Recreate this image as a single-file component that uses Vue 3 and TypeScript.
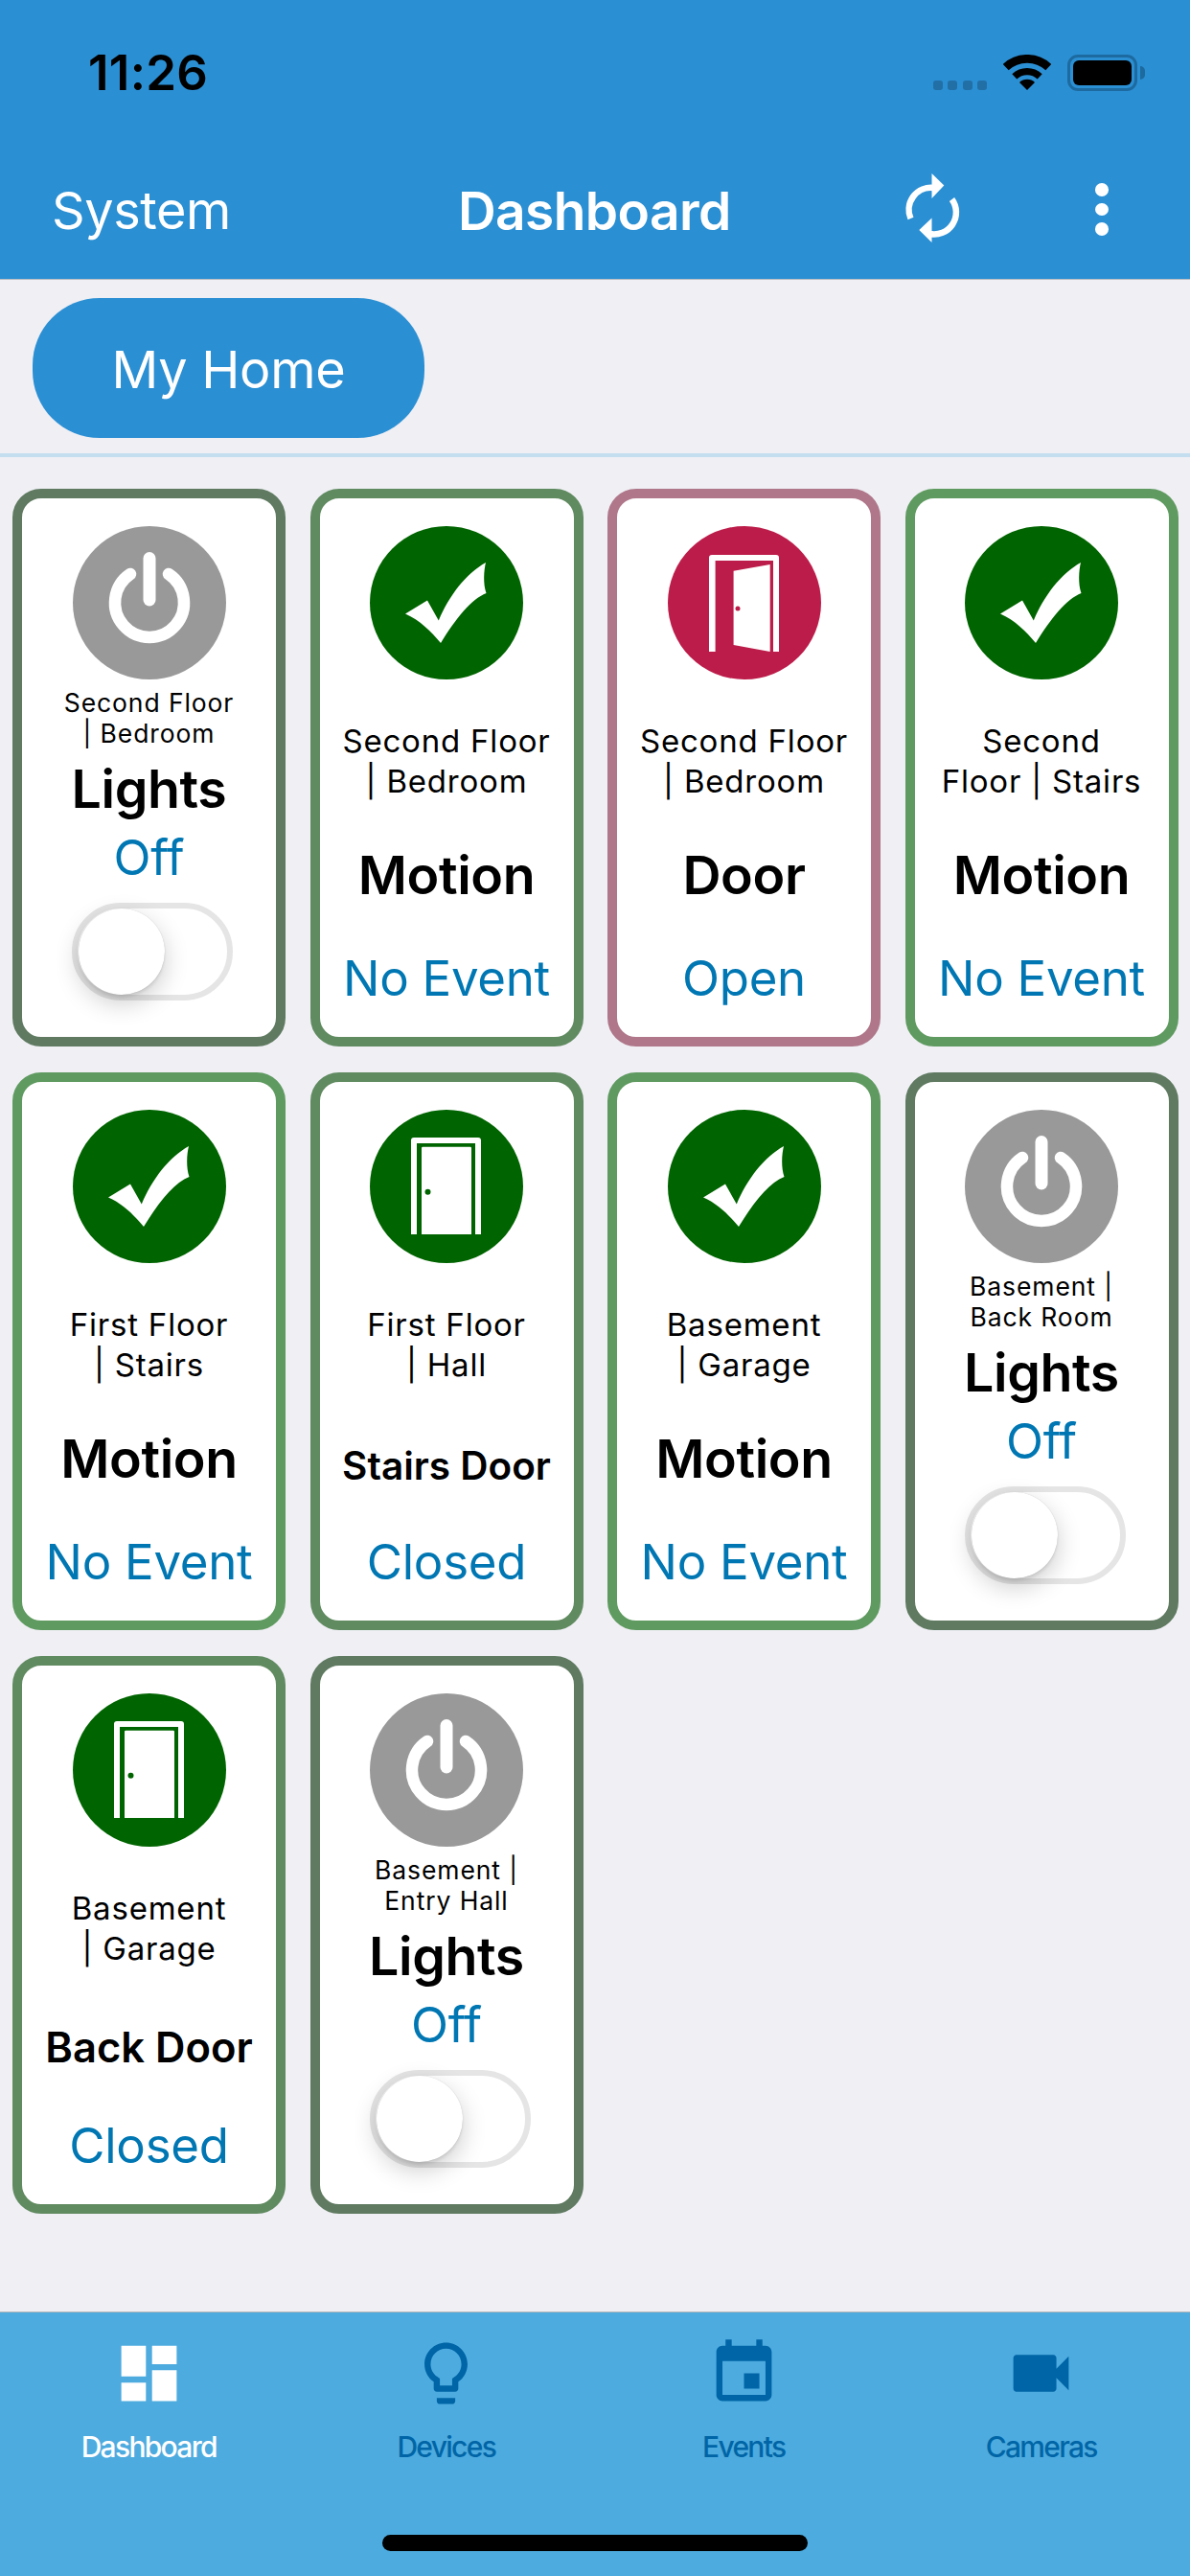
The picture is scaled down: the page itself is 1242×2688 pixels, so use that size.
<script setup lang="ts">
type Kind = 'lights' | 'sensor'
type Icon = 'power' | 'check' | 'door-open' | 'door-closed'
type Tone = 'slate' | 'moss' | 'leaf' | 'rose'
type Fit = 'none' | 'stairs' | 'back'

interface Card {
  kind: Kind
  icon: Icon
  tone: Tone
  lines: [string, string]
  title: string
  fit?: Fit
  status: string
}

const cards: Card[] = [
  { kind: 'lights', icon: 'power', tone: 'slate', lines: ['Second Floor', '| Bedroom'], title: 'Lights', status: 'Off' },
  { kind: 'sensor', icon: 'check', tone: 'moss', lines: ['Second Floor', '| Bedroom'], title: 'Motion', status: 'No Event' },
  { kind: 'sensor', icon: 'door-open', tone: 'rose', lines: ['Second Floor', '| Bedroom'], title: 'Door', status: 'Open' },
  { kind: 'sensor', icon: 'check', tone: 'leaf', lines: ['Second', 'Floor | Stairs'], title: 'Motion', status: 'No Event' },
  { kind: 'sensor', icon: 'check', tone: 'leaf', lines: ['First Floor', '| Stairs'], title: 'Motion', status: 'No Event' },
  { kind: 'sensor', icon: 'door-closed', tone: 'moss', lines: ['First Floor', '| Hall'], title: 'Stairs Door', fit: 'stairs', status: 'Closed' },
  { kind: 'sensor', icon: 'check', tone: 'leaf', lines: ['Basement', '| Garage'], title: 'Motion', status: 'No Event' },
  { kind: 'lights', icon: 'power', tone: 'slate', lines: ['Basement |', 'Back Room'], title: 'Lights', status: 'Off' },
  { kind: 'sensor', icon: 'door-closed', tone: 'moss', lines: ['Basement', '| Garage'], title: 'Back Door', fit: 'back', status: 'Closed' },
  { kind: 'lights', icon: 'power', tone: 'slate', lines: ['Basement |', 'Entry Hall'], title: 'Lights', status: 'Off' },
]

const tabs = [
  { label: 'Dashboard', active: true, d: 'M3 13h8V3H3v10zm0 8h8v-6H3v6zm10 0h8V11h-8v10zm0-18v6h8V3h-8z' },
  { label: 'Devices', active: false, d: 'M9 21c0 .55.45 1 1 1h4c.55 0 1-.45 1-1v-1H9v1zm3-19C8.14 2 5 5.14 5 9c0 2.38 1.19 4.47 3 5.74V17c0 .55.45 1 1 1h6c.55 0 1-.45 1-1v-2.26c1.81-1.27 3-3.36 3-5.74 0-3.86-3.14-7-7-7zm2.85 11.1l-.85.6V16h-4v-2.3l-.85-.6C7.8 12.16 7 10.63 7 9c0-2.76 2.24-5 5-5s5 2.24 5 5c0 1.63-.8 3.16-2.15 4.1z' },
  { label: 'Events', active: false, d: 'M17 12h-5v5h5v-5zM16 1v2H8V1H6v2H5c-1.11 0-1.99.9-1.99 2L3 19c0 1.1.89 2 2 2h14c1.1 0 2-.9 2-2V5c0-1.1-.9-2-2-2h-1V1h-2zm3 18H5V8h14v11z' },
  { label: 'Cameras', active: false, d: 'M17 10.5V7c0-.55-.45-1-1-1H4c-.55 0-1 .45-1 1v10c0 .55.45 1 1 1h12c.55 0 1-.45 1-1v-3.5l4 4v-11l-4 4z' },
]
</script>

<template>
  <div class="screen">
    <header class="header">
      <div class="status-bar">
        <span class="time">11:26</span>
        <div class="status-icons">
          <div class="signal"><i></i><i></i><i></i><i></i></div>
          <svg class="wifi" width="50" height="37" viewBox="0 0 50 37">
            <path d="M2.7 13.1A32.7 32.7 0 0 1 47.3 13.1" fill="none" stroke="#000" stroke-width="8.7" />
            <path d="M11.8 22.9A19.3 19.3 0 0 1 38.2 22.9" fill="none" stroke="#000" stroke-width="7.3" />
            <path d="M25 37L17 29A11.3 11.3 0 0 1 33 29Z" fill="#000" />
          </svg>
          <div class="battery"><div class="battery-fill"></div></div>
          <div class="battery-cap"></div>
        </div>
      </div>
      <nav class="nav">
        <span class="nav-left">System</span>
        <span class="nav-title">Dashboard</span>
        <svg class="refresh" width="100" height="100" viewBox="0 0 100 100">
          <path d="M28.5 58A23 23 0 0 1 52 26" fill="none" stroke="#fff" stroke-width="6.5" />
          <path d="M50.5 11L63.3 23.5L50.5 37Z" fill="#fff" />
          <path d="M71.5 38A23 23 0 0 1 48 74" fill="none" stroke="#fff" stroke-width="6.5" />
          <path d="M37.3 70L50.5 57.5V83Z" fill="#fff" />
        </svg>
        <div class="dots"><i></i><i></i><i></i></div>
      </nav>
    </header>

    <main class="content">
      <div class="pill-row">
        <button class="pill" type="button">My Home</button>
      </div>
      <div class="divider"></div>
      <section class="grid">
        <article
          v-for="(card, i) in cards"
          :key="i"
          class="card"
          :class="[`tone-${card.tone}`, `kind-${card.kind}`]"
        >
          <svg class="badge" width="160" height="160" viewBox="0 0 160 160">
            <template v-if="card.icon === 'power'">
              <circle cx="80" cy="80" r="80" fill="#999999" />
              <path d="M60 50A36 36 0 1 0 100 50" fill="none" stroke="#fff" stroke-width="12.5" stroke-linecap="round" />
              <path d="M80 33.5V77" fill="none" stroke="#fff" stroke-width="13" stroke-linecap="round" />
            </template>
            <template v-else-if="card.icon === 'check'">
              <circle cx="80" cy="80" r="80" fill="#006400" />
              <path d="M121 38C119 46 118 60 121.5 70C106 76 90 96 74 122C64 110 52 98 37 91.5L60 77.5L71.8 98.5C83 72 100 50 121 38Z" fill="#fff" />
            </template>
            <template v-else-if="card.icon === 'door-open'">
              <circle cx="80" cy="80" r="80" fill="#bc1c49" />
              <path d="M43 131V33Q43 30 46 30H113Q116 30 116 33V131H110V36H49.6V131Z" fill="#fff" />
              <path d="M68.6 46.7L106.7 40V131L68.6 124Z" fill="#fff" />
              <circle cx="73" cy="86" r="2.5" fill="#bc1c49" />
            </template>
            <template v-else>
              <circle cx="80" cy="80" r="80" fill="#006400" />
              <path d="M43 130V32Q43 29 46 29H113Q116 29 116 32V130H110V35H49V130Z" fill="#fff" />
              <path d="M54 130V40Q54 38.7 55.3 38.7H104.7Q106 38.7 106 40V130Z" fill="#fff" />
              <circle cx="60.5" cy="85.7" r="3" fill="#006400" />
            </template>
          </svg>

          <div class="location">
            <span v-for="line in card.lines" :key="line">{{ line }}</span>
          </div>
          <div class="title" :class="card.fit ? `fit-${card.fit}` : ''">{{ card.title }}</div>
          <div class="state">{{ card.status }}</div>
          <div v-if="card.kind === 'lights'" class="toggle"><div class="thumb"></div></div>
        </article>
      </section>
    </main>

    <footer class="tabbar">
      <div class="tabs">
        <div v-for="tab in tabs" :key="tab.label" class="tab" :class="{ active: tab.active }">
          <svg width="77" height="77" viewBox="0 0 24 24"><path :d="tab.d" fill="currentColor" /></svg>
          <span class="tab-label">{{ tab.label }}</span>
        </div>
      </div>
      <div class="home-indicator"></div>
    </footer>
  </div>
</template>

<style>
html, body { margin: 0; padding: 0; background: #efeff4; }
</style>

<style scoped>
.screen {
  width: 1242px;
  height: 2688px;
  display: flex;
  flex-direction: column;
  background: #efeff4;
  font-family: Inter, "Liberation Sans", sans-serif;
  overflow: hidden;
}
.header {
  background: #2b8fd3;
  height: 291px;
  border-bottom: 1px solid #b9bcc0;
  flex: none;
  display: flex;
  flex-direction: column;
}
.status-bar {
  height: 170px;
  display: flex;
  padding: 46px 47px 0 92px;
  box-sizing: border-box;
  justify-content: space-between;
  align-items: flex-start;
}
.time {
  font-size: 51px;
  line-height: 60px;
  font-weight: 600;
  letter-spacing: 0.3px;
  color: #000;
}
.status-icons {
  display: flex;
  align-items: flex-end;
  margin-top: 11px;
  height: 38px;
}
.signal { display: flex; gap: 5.5px; margin-right: 17px; margin-bottom: 1px; }
.signal i { display: block; width: 10px; height: 10.5px; border-radius: 3px; background: #226fa6; }
.wifi { display: block; margin-right: 17px; margin-bottom: 1px; }
.battery {
  width: 73px;
  height: 38px;
  box-sizing: border-box;
  border: 3.5px solid #1c6a9f;
  border-radius: 11px;
  padding: 3px;
}
.battery-fill { width: 100%; height: 100%; background: #000; border-radius: 6px; }
.battery-cap {
  width: 5px;
  height: 14px;
  margin: 0 0 12px 3px;
  background: #1c6a9f;
  border-radius: 0 7px 7px 0;
}
.nav {
  height: 100px;
  display: flex;
  align-items: center;
  padding-left: 54px;
  color: #fff;
}
.nav-left { width: 424px; font-size: 54px; line-height: 64px; letter-spacing: -0.4px; }
.nav-title { width: 444px; font-size: 55px; line-height: 64px; font-weight: 600; letter-spacing: -0.6px; }
.refresh { display: block; flex: none; }
.dots { display: flex; flex-direction: column; gap: 7px; margin-left: 121px; margin-top: -3px; }
.dots i { display: block; width: 14px; height: 13.5px; border-radius: 50%; background: #fff; }

.content { flex: 1; }
.pill-row { padding: 19px 0 16px 34px; }
.pill {
  display: block;
  width: 409px;
  height: 146px;
  padding: 3px 0 0;
  border: 0;
  border-radius: 70px;
  background: #2b8fd3;
  color: #fff;
  font-family: inherit;
  font-size: 54px;
  font-weight: 400;
  letter-spacing: -0.3px;
}
.divider { height: 4px; background: #c4deef; }
.grid {
  display: grid;
  grid-template-columns: repeat(4, 285px);
  grid-auto-rows: 582px;
  column-gap: 25.5px;
  row-gap: 27px;
  padding: 33px 0 0 13px;
}
.card {
  box-sizing: border-box;
  background: #fff;
  border: 10px solid #5f9a60;
  border-radius: 30px;
  padding-top: 29px;
  display: flex;
  flex-direction: column;
  align-items: center;
  text-align: center;
  color: #000;
}
.tone-slate { border-color: #5f7a60; }
.tone-moss { border-color: #608a60; }
.tone-leaf { border-color: #5f9a60; }
.tone-rose { border-color: #af7789; }
.badge { display: block; flex: none; }
.location span { display: block; white-space: nowrap; }
.location {
  margin-top: 43px;
  font-size: 33px;
  line-height: 42px;
  letter-spacing: 0.8px;
}
.title {
  margin-top: 45px;
  height: 64px;
  font-size: 55.5px;
  line-height: 64px;
  font-weight: 600;
  letter-spacing: -0.4px;
  white-space: nowrap;
}
.fit-stairs {
  box-sizing: border-box;
  padding-top: 8px;
  font-size: 40.5px;
  letter-spacing: 0;
}
.fit-back {
  box-sizing: border-box;
  padding-top: 5px;
  font-size: 43.5px;
  letter-spacing: 0;
}
.state {
  margin-top: 46px;
  font-size: 51px;
  line-height: 60px;
  color: #0077b3;
  letter-spacing: -0.3px;
  white-space: nowrap;
}
.kind-lights .location {
  margin-top: 8px;
  font-size: 26.5px;
  line-height: 32px;
  letter-spacing: 0.9px;
}
.kind-lights .title { margin-top: 10px; }
.kind-lights .state { margin-top: 10px; }
.toggle {
  margin-top: 17px;
  margin-left: 7px;
  width: 168px;
  height: 102px;
  box-sizing: border-box;
  border: 6px solid #e5e5e5;
  border-radius: 51px;
  background: #fff;
  padding-left: 1px;
}
.thumb {
  width: 90px;
  height: 90px;
  border-radius: 50%;
  background: #fff;
  box-shadow: 0 9px 26px rgba(0, 0, 0, 0.2), 0 3px 3px rgba(0, 0, 0, 0.08), 0 0 1px rgba(0, 0, 0, 0.2);
}
.tabbar {
  flex: none;
  height: 276px;
  box-sizing: border-box;
  background: #4dabdf;
  border-top: 1px solid #b4b6b8;
  padding-top: 24.5px;
  display: flex;
  flex-direction: column;
  align-items: center;
}
.tabs { display: grid; grid-template-columns: repeat(4, 310.5px); }
.tab {
  display: flex;
  flex-direction: column;
  align-items: center;
  color: #0065a6;
}
.tab svg { display: block; }
.tab.active { color: #fff; }
.tab-label {
  margin-top: 20px;
  font-size: 30px;
  line-height: 36px;
  font-weight: 500;
  letter-spacing: -1.7px;
}
.home-indicator {
  margin-top: 74px;
  width: 444px;
  height: 17px;
  border-radius: 9px;
  background: #000;
}
</style>
